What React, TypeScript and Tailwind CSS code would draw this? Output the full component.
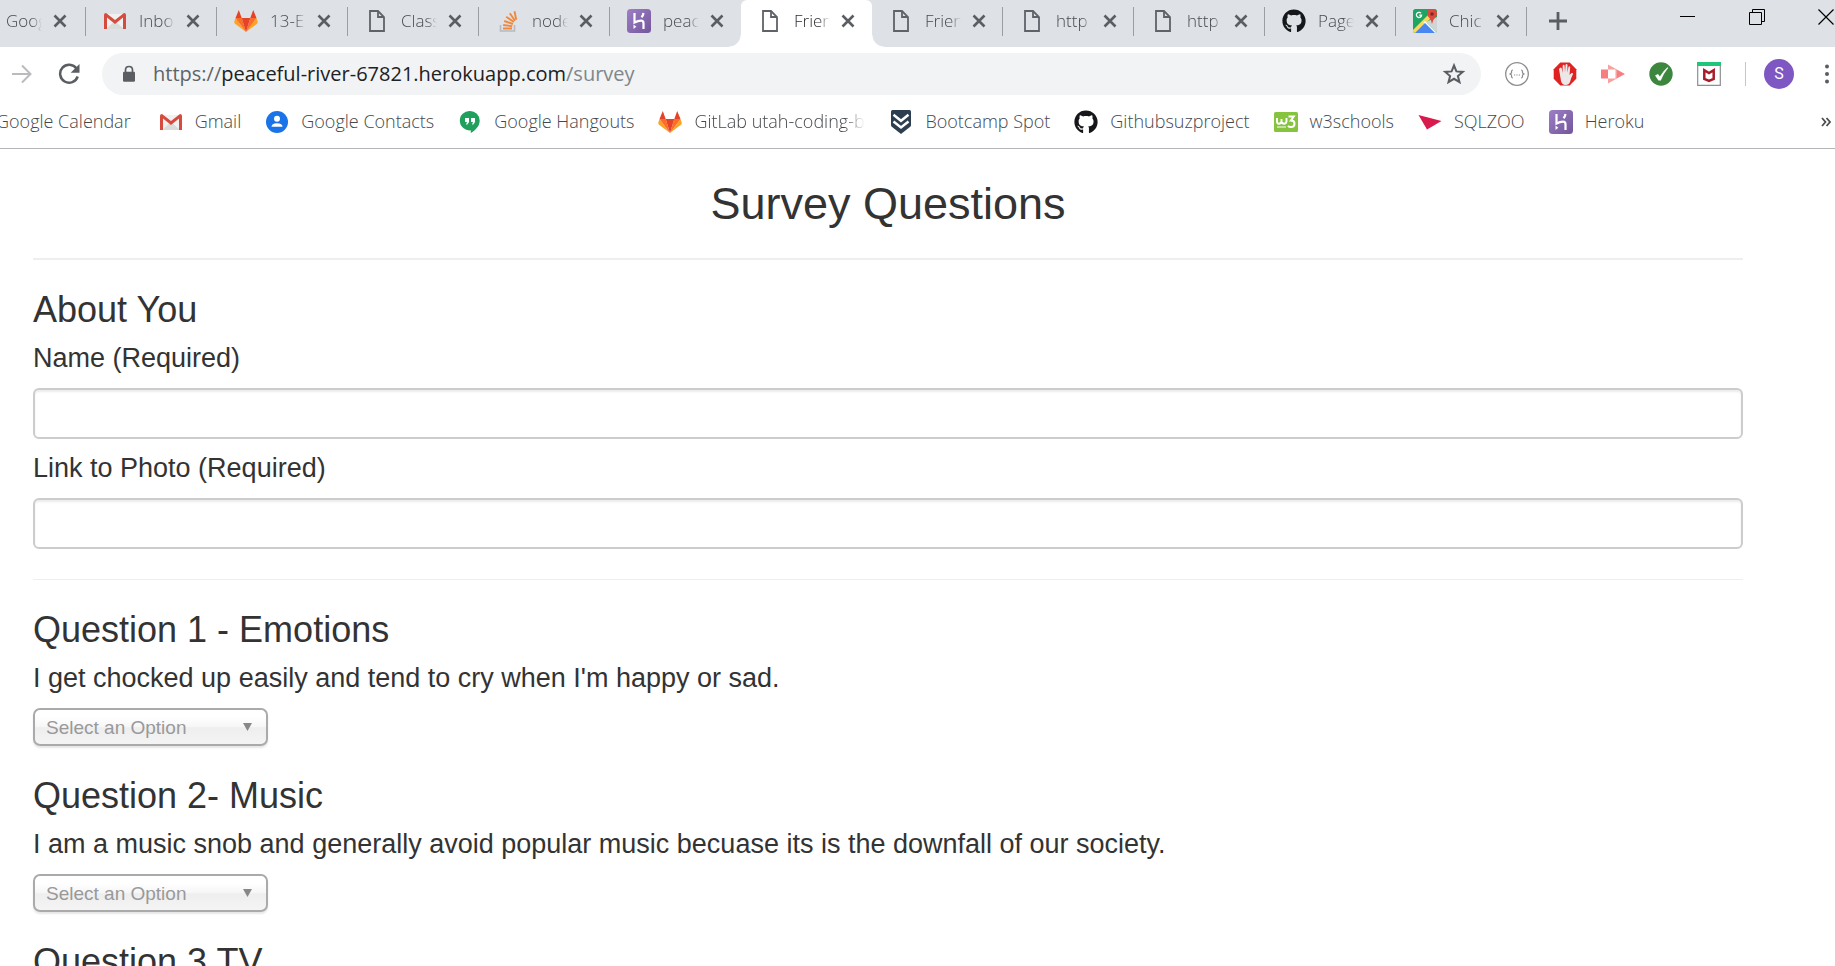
import { useId, useState, type ReactNode } from "react";
import { FaGithub } from "react-icons/fa";

function GmailIcon() {
  return (
    <svg viewBox="0 0 24 24" className="size-6" aria-hidden="true">
      <path d="M3 5h18v15H3z" fill="#f1f1f1" />
      <path d="M3 20 12 12l9 8z" fill="#d9dcd8" />
      <path d="M1 6q0-2 2-2l9 7 9-7q2 0 2 2v14h-3V8.500l-8 6.500-8-6.500V20H1z" fill="#d54b3d" />
    </svg>
  );
}

function GitLabIcon() {
  return (
    <svg viewBox="0 0 24 24" className="size-6" aria-hidden="true">
      <path d="M1.500 9 .200 13l.500 1.500L12 23z M22.500 9l1.300 4-.500 1.500L12 23z" fill="#fca326" />
      <path d="M1.500 9h6.200L12 23z M22.500 9h-6.200L12 23z" fill="#fc6d26" />
      <path d="M7.700 9h8.600L12 23z M4.800 1l2.900 8H1.500z M19.200 1l-2.900 8h6.200z" fill="#e24329" />
    </svg>
  );
}

function PageIcon() {
  return (
    <svg viewBox="0 0 24 24" className="size-6" fill="none" stroke="#5f6368" strokeWidth="1.800" aria-hidden="true">
      <path d="M5 2h8l6 6v14H5z" />
      <path d="M13 2v6h6" />
    </svg>
  );
}

function StackIcon() {
  return (
    <svg viewBox="0 0 24 24" className="size-6" fill="none" aria-hidden="true">
      <path d="M4.500 16v6h14v-6" stroke="#b8babd" strokeWidth="1.600" />
      <g stroke="#f0893f" strokeWidth="1.900">
        <path d="M7 19.500h9M7.200 16l9 1.200M8.200 12l8.700 3M10.200 7.800l7.700 5.200M13.800 4.200l5.200 7.500M18.500 2.200l1.700 8.500" />
      </g>
    </svg>
  );
}

function HerokuIcon() {
  return (
    <svg viewBox="0 0 24 24" className="size-6" aria-hidden="true">
      <defs>
        <linearGradient id="heroku" x1="0" y1="0" x2="1" y2="1">
          <stop offset="0" stopColor="#9d7fc6" />
          <stop offset="1" stopColor="#73559c" />
        </linearGradient>
      </defs>
      <rect width="24" height="24" rx="3.500" fill="url(#heroku)" />
      <g fill="none" stroke="#fff" strokeWidth="2.200">
        <path d="M7.500 4v9.500q3.500-1.800 6.500-1.800 2.500 0 2.500 2.500V20" />
        <path d="M16.500 4q-.300 2.300-2 4.200" />
      </g>
      <path d="m6.500 15.500 2.800 2.300-2.800 2.300z" fill="#fff" />
    </svg>
  );
}

function GithubIcon() {
  return <FaGithub className="size-6 text-[#15171a]" aria-hidden="true" />;
}

function MapsIcon() {
  return (
    <svg viewBox="0 0 24 24" className="size-6" aria-hidden="true">
      <defs>
        <clipPath id="map-tile">
          <rect width="24" height="24" rx="2.500" />
        </clipPath>
      </defs>
      <g clipPath="url(#map-tile)">
        <path d="M0 0h24v24H0z" fill="#1fa463" />
        <path d="M24 8v16l-11-11z" fill="#d2d3d5" />
        <path d="M0 21 18 3l3 3L3 24H0z" fill="#fbd75b" />
        <path d="m12 12 12 12h-3L10.500 13.500z" fill="#fff" />
        <path d="M2 24 12 14l10 10z" fill="#4a86f0" />
      </g>
      <path d="M19 15q-.300-4-3-6.500A5 5 0 1 1 22.600 8Q19.500 11 19 15z" fill="#de4a3c" />
      <circle cx="19" cy="5" r="1.800" fill="#7d2b24" />
      <path d="M8 4.200A2.600 2.600 0 1 0 8.600 6.200H6.200" fill="none" stroke="#fff" strokeWidth="1.300" />
    </svg>
  );
}

function ContactsIcon() {
  return (
    <svg viewBox="0 0 24 24" className="size-6" aria-hidden="true">
      <circle cx="12" cy="12" r="11" fill="#1a73e8" />
      <circle cx="12" cy="8.800" r="3" fill="#fff" />
      <path d="M6.500 16.800q0-3.600 5.500-3.600t5.500 3.600z" fill="#fff" />
    </svg>
  );
}

function HangoutsIcon() {
  return (
    <svg viewBox="0 0 24 24" className="size-6" aria-hidden="true">
      <path d="M12 1a9.700 9.700 0 0 1 9.700 9.700c0 5-4.200 9.800-8.900 12.200v-2.600A9.700 9.700 0 1 1 12 1z" fill="#1fa15d" />
      <path d="M7 8h4v4l-1.600 2.500H8L9 12H7z M13 8h4v4l-1.600 2.500H14L15 12h-2z" fill="#fff" />
    </svg>
  );
}

function BootcampIcon() {
  return (
    <svg viewBox="0 0 24 24" className="size-6" aria-hidden="true">
      <path d="M3.500 0h17q1.500 0 1.500 1.500V15q0 1-.800 1.700L12 24l-9.200-7.300Q2 16 2 15V1.500Q2 0 3.500 0z" fill="#2c3e50" />
      <path d="m4.500 4.800 7.500 6 7.500-6M4.500 11.500l7.500 6 7.500-6" fill="none" stroke="#fff" strokeWidth="2.500" />
    </svg>
  );
}

function W3Icon() {
  return (
    <svg viewBox="0 0 24 24" className="size-6" fill="none" stroke="#fff" aria-hidden="true">
      <rect y="2" width="24" height="20" rx="1.500" fill="#86c440" stroke="none" />
      <path d="M3 8v3.500q0 2.200 2 2.200t2.500-2.200V9v2.500q.500 2.200 2.500 2.200t2.500-2.200V8" strokeWidth="1.900" />
      <path d="M14.500 6.500h5.200l-2.800 4q3.600 0 3.600 3.200T17 17q-2 0-3-1.200" strokeWidth="2" />
      <path d="M3 17h9" strokeWidth="1" />
    </svg>
  );
}

function SqlzooIcon() {
  return (
    <svg viewBox="0 0 24 24" className="size-6" aria-hidden="true">
      <path d="M.500 5 23.500 11 9 19.500z" fill="#d91a4c" />
    </svg>
  );
}

function CloseIcon() {
  return (
    <svg viewBox="0 0 14 14" className="size-3.5" stroke="#5a5d61" strokeWidth="2.600" aria-hidden="true">
      <path d="m1.500 1.500 11 11m0-11-11 11" />
    </svg>
  );
}

type TabInfo = { title: string; icon: ReactNode; active?: boolean; divider?: boolean };

const tabs: TabInfo[] = [
  { title: "Inbo", icon: <GmailIcon />, divider: true },
  { title: "13-E", icon: <GitLabIcon />, divider: true },
  { title: "Class", icon: <PageIcon />, divider: true },
  { title: "node", icon: <StackIcon />, divider: true },
  { title: "peac", icon: <HerokuIcon /> },
  { title: "Frien", icon: <PageIcon />, active: true },
  { title: "Frien", icon: <PageIcon />, divider: true },
  { title: "http", icon: <PageIcon />, divider: true },
  { title: "http", icon: <PageIcon />, divider: true },
  { title: "Page", icon: <GithubIcon />, divider: true },
  { title: "Chic", icon: <MapsIcon />, divider: true },
];

const fade = "[mask-image:linear-gradient(to_right,black_70%,transparent)]";

function Divider() {
  return <span className="absolute top-[7px] right-0 h-[29px] w-px bg-[#9a9da2]" />;
}

function Tab({ title, icon, active, divider }: TabInfo) {
  return (
    <div
      className={
        "relative flex h-full w-[131px] shrink-0 items-center pb-[5px] pl-[17px] " +
        (active
          ? "rounded-t-md bg-white text-[#2c2f33] before:absolute before:bottom-0 before:-left-3 before:size-3 before:bg-[radial-gradient(circle_at_0_0,transparent_11px,white_12px)] after:absolute after:-right-3 after:bottom-0 after:size-3 after:bg-[radial-gradient(circle_at_100%_0,transparent_11px,white_12px)]"
          : "text-[#484c51]")
      }
    >
      {icon}
      <span className={"ml-3 w-9 overflow-hidden whitespace-nowrap " + fade}>{title}</span>
      <button type="button" aria-label={"Close " + title} className="ml-2 flex size-5 items-center justify-center">
        <CloseIcon />
      </button>
      {divider && <Divider />}
    </div>
  );
}

function TabStrip() {
  return (
    <div className="flex h-[47px] items-center bg-[#dee1e6] text-[17px] font-light">
      <div className="relative flex h-full w-[86px] shrink-0 items-center pb-[5px] pl-1.5 text-[#484c51]">
        <span className={"w-9 overflow-hidden whitespace-nowrap " + fade}>Goog</span>
        <button type="button" aria-label="Close Goog" className="ml-2 flex size-5 items-center justify-center">
          <CloseIcon />
        </button>
        <Divider />
      </div>
      {tabs.map((tab, i) => (
        <Tab key={i} {...tab} />
      ))}
      <button type="button" aria-label="New tab" className="ml-[22px] pb-[5px]">
        <svg viewBox="0 0 18 18" className="size-[18px]" stroke="#5a5d61" strokeWidth="2.800" aria-hidden="true">
          <path d="M9 0v18M0 9h18" />
        </svg>
      </button>
      <div className="mr-px ml-auto flex shrink-0 gap-[53px] pb-[13px]">
        <button type="button" aria-label="Minimize">
          <svg viewBox="0 0 16 16" className="size-4" stroke="#000" aria-hidden="true">
            <path d="M0 7.500h15" />
          </svg>
        </button>
        <button type="button" aria-label="Restore">
          <svg viewBox="0 0 16 16" className="size-4" fill="none" stroke="#000" aria-hidden="true">
            <path d="M.500 3.500h12v12H.500zM3.500 3.500v-3h12v12h-3" />
          </svg>
        </button>
        <button type="button" aria-label="Close window">
          <svg viewBox="0 0 16 16" className="size-4" stroke="#000" strokeWidth="1.200" aria-hidden="true">
            <path d="m.500.500 15 15m0-15-15 15" />
          </svg>
        </button>
      </div>
    </div>
  );
}

function AddressText() {
  const [editing, setEditing] = useState(false);
  const [url, setUrl] = useState("https://peaceful-river-67821.herokuapp.com/survey");
  if (editing) {
    return (
      <input
        aria-label="Address"
        autoFocus
        value={url}
        onChange={(e) => setUrl(e.target.value)}
        onBlur={() => setEditing(false)}
        className="flex-1 bg-transparent text-[20px] outline-none"
      />
    );
  }
  const [, scheme, host, path] = url.match(/^(\w+:\/\/)?([^/]*)(.*)$/) ?? ["", "", url, ""];
  return (
    <button
      type="button"
      onClick={() => setEditing(true)}
      className="flex-1 cursor-text text-left text-[20px] whitespace-nowrap text-[#80868b]"
    >
      <span className="text-[#5f6368]">{scheme}</span>
      <span className="text-[#202124]">{host}</span>
      {path}
    </button>
  );
}

function Extensions() {
  return (
    <div className="ml-6 flex shrink-0 items-center gap-6">
      <button type="button" aria-label="JSON viewer">
        <svg viewBox="0 0 24 24" className="size-6" fill="none" stroke="#8b8e91" aria-hidden="true">
          <circle cx="12" cy="12" r="11.300" strokeWidth="1.300" />
          <path d="M8 8q-1.500 0-1.500 1.500v1.500L5 12l1.500 1v1.500Q6.500 16 8 16M16 8q1.500 0 1.500 1.500v1.500l1.500 1-1.500 1v1.500q0 1.500-1.500 1.500" strokeWidth="1.200" />
          <path d="M9 13h1.200M11.400 13h1.200M13.800 13H15" strokeWidth="1.200" />
        </svg>
      </button>
      <button type="button" aria-label="Ad blocker">
        <svg viewBox="0 0 24 24" className="size-6" aria-hidden="true">
          <path d="M7.300.500h9.400l6.600 6.700v9.600l-6.600 6.700H7.300L.700 16.800V7.200z" fill="#df2222" />
          <path
            d="M7 6q1.300-1 1.700.300L9.500 11l.200-7.500q1-1.500 1.900 0L12 10.500l.600-8q1.200-1.300 1.900.200l-.100 8 1.100-6q1.400-1 1.700.500L16.500 13l2-2q1.800-.400 1.500 1-2 4-3 8-1 3-4.500 3Q9 23 8 19L6 7z"
            fill="#ece8e8"
          />
        </svg>
      </button>
      <button type="button" aria-label="Screen recorder">
        <svg viewBox="0 0 24 24" className="size-6" aria-hidden="true">
          <path d="M0 7.500h7v9H0z" fill="#f77d80" />
          <path d="M7 2.500 24 12 7 21.500v-5h7.500v-9H7z" fill="#f9a0a1" />
          <path d="M16 8v8l7.500-4z" fill="#f77d80" />
          <path d="M8.500 8.500H13v7H8.500z" fill="#fff" />
        </svg>
      </button>
      <button type="button" aria-label="Site check">
        <svg viewBox="0 0 24 24" className="size-6" aria-hidden="true">
          <circle cx="12" cy="12" r="11.700" fill="#3c873d" />
          <path d="m6 13.500 3-1.500 1.800 2.500Q14 9 18.500 5.200l.800.500Q14.500 11.500 11.800 18.500H9.500z" fill="#fff" />
        </svg>
      </button>
      <button type="button" aria-label="Web advisor">
        <svg viewBox="0 0 24 24" className="size-6" aria-hidden="true">
          <path d="M.700.700h22.600v22.600H.700z" fill="#fff" stroke="#8c8f93" strokeWidth="1.200" />
          <path d="M0 0h24v4H0z" fill="#1fc67a" />
          <path d="M7.300 8.200v8.600l4.700 2 4.700-2V8.200L12 11z" fill="#fff" stroke="#a81c2a" strokeWidth="2.500" />
        </svg>
      </button>
      <span className="h-6 w-px bg-[#c4c7ca]" />
    </div>
  );
}

function Toolbar() {
  return (
    <div className="flex h-[54px] items-center bg-white pl-3">
      <button type="button" aria-label="Forward" className="shrink-0">
        <svg viewBox="0 0 20 20" className="size-5" fill="none" stroke="#b9bbbe" strokeWidth="2" aria-hidden="true">
          <path d="M0 10h18M10 1.500l8.500 8.500-8.500 8.500" />
        </svg>
      </button>
      <button type="button" aria-label="Reload" className="ml-[26px] shrink-0">
        <svg viewBox="0 0 22 22" className="size-[22px]" aria-hidden="true">
          <path d="M18.500 5.500A9 9 0 1 0 19.700 13.500" fill="none" stroke="#5a5d61" strokeWidth="2.500" />
          <path d="M21.500 1v8.800h-8.800z" fill="#5a5d61" />
        </svg>
      </button>
      <div className="ml-[22px] flex h-[42px] flex-1 items-center rounded-full bg-[#f1f3f4] pr-[15px] pl-5">
        <svg viewBox="0 0 14 18" className="h-[18px] w-3.5 shrink-0" aria-hidden="true">
          <path d="M3.500 8V5q0-3.500 3.500-3.500T10.500 5v3" fill="none" stroke="#5a5d61" strokeWidth="1.700" />
          <rect x="1" y="6.800" width="12" height="10" rx="1.300" fill="#5a5d61" />
        </svg>
        <span className="w-[17px]" />
        <AddressText />
        <button type="button" aria-label="Bookmark this page">
          <svg viewBox="0 0 24 24" className="size-6" fill="none" stroke="#5a5d61" strokeWidth="2" aria-hidden="true">
            <path d="m12 3.500 2.400 5.900 6.400.500-4.900 4.100 1.600 6.200-5.500-3.400-5.500 3.400 1.600-6.200L3.200 9.900l6.400-.500z" />
          </svg>
        </button>
      </div>
      <Extensions />
      <button
        type="button"
        className="ml-[18px] flex size-[30px] shrink-0 items-center justify-center rounded-full bg-[#7e57c2] font-['Roboto',sans-serif] text-[16px] text-white"
      >
        S
      </button>
      <button type="button" aria-label="Menu" className="mr-1.5 ml-[31px] shrink-0">
        <svg viewBox="0 0 4 20" className="h-5 w-1" fill="#5a5d61" aria-hidden="true">
          <circle cx="2" cy="2.500" r="2" />
          <circle cx="2" cy="10" r="2" />
          <circle cx="2" cy="17.500" r="2" />
        </svg>
      </button>
    </div>
  );
}

const bookmarks: { title: string; icon: ReactNode; long?: boolean }[] = [
  { title: "Gmail", icon: <GmailIcon /> },
  { title: "Google Contacts", icon: <ContactsIcon /> },
  { title: "Google Hangouts", icon: <HangoutsIcon /> },
  { title: "GitLab utah-coding-b", icon: <GitLabIcon />, long: true },
  { title: "Bootcamp Spot", icon: <BootcampIcon /> },
  { title: "Githubsuzproject", icon: <GithubIcon /> },
  { title: "w3schools", icon: <W3Icon /> },
  { title: "SQLZOO", icon: <SqlzooIcon /> },
  { title: "Heroku", icon: <HerokuIcon /> },
];

function BookmarksBar() {
  return (
    <nav className="flex h-12 items-center gap-6 overflow-hidden border-b border-[#b3b5b8] bg-white pb-1.5 text-[18px] font-light whitespace-nowrap text-[#44484c]">
      <a href="#calendar" className="-ml-1 pr-1">
        Google Calendar
      </a>
      {bookmarks.map((b) => (
        <a key={b.title} href={"#" + b.title} className="flex items-center gap-3">
          {b.icon}
          <span
            className={
              b.long
                ? "w-[171px] overflow-hidden [mask-image:linear-gradient(to_right,black_88%,transparent)]"
                : ""
            }
          >
            {b.title}
          </span>
        </a>
      ))}
      <button type="button" aria-label="More bookmarks" className="mr-1 ml-auto">
        <svg viewBox="0 0 10 10" className="size-2.5" fill="none" stroke="#4a4d50" strokeWidth="1.800" aria-hidden="true">
          <path d="m1 1 3.500 4L1 9M5.500 1 9 5 5.500 9" />
        </svg>
      </button>
    </nav>
  );
}

const labelStyle = "mt-3.5 mb-[15px] block text-[27px] leading-[30px]";

function TextField({ label }: { label: string }) {
  const id = useId();
  return (
    <>
      <label htmlFor={id} className={labelStyle}>
        {label}
      </label>
      <input
        id={id}
        type="text"
        className="block h-[51px] w-full rounded-md border-2 border-[#ccc] bg-white px-4 text-[21px] shadow-[inset_0_2px_2px_rgba(0,0,0,0.075)]"
      />
    </>
  );
}

function Question({ title, text }: { title: string; text?: string }) {
  const id = useId();
  return (
    <section className="mb-[30px]">
      <h3 className="text-[36px] leading-[39px]">{title}</h3>
      {text && (
        <>
          <label htmlFor={id} className={labelStyle}>
            {text}
          </label>
          <div className="relative w-[235px]">
            <select
              id={id}
              className="block h-[38px] w-full appearance-none rounded-[7px] border-2 border-[#aaa] bg-[linear-gradient(#fff_20%,#f6f6f6_50%,#eee_52%,#f4f4f4)] pt-0.5 pl-[11px] text-[19px] text-[#999] shadow-[0_2px_2px_rgba(0,0,0,0.1)]"
            >
              <option>Select an Option</option>
            </select>
            <svg
              viewBox="0 0 9 8"
              className="pointer-events-none absolute top-[15px] right-4 h-2 w-[9px]"
              fill="#888"
              aria-hidden="true"
            >
              <path d="M0 0h9L4.500 8z" />
            </svg>
          </div>
        </>
      )}
    </section>
  );
}

export default function App() {
  return (
    <div className="flex h-screen flex-col overflow-hidden bg-white">
      <header className="shrink-0 font-['Open_Sans','Noto_Sans',sans-serif]">
        <TabStrip />
        <Toolbar />
        <BookmarksBar />
      </header>
      <main className="min-h-0 flex-1 overflow-y-auto pt-[30px] pr-[92px] pl-[33px] font-['Liberation_Sans',Arial,sans-serif] text-[#333] [scrollbar-width:none]">
        <h2 className="text-center text-[45px] leading-[50px]">Survey Questions</h2>
        <hr className="mt-[29px] mb-[30px] border-t-2 border-[#eee]" />
        <h3 className="text-[36px] leading-[39px]">About You</h3>
        <TextField label="Name (Required)" />
        <TextField label="Link to Photo (Required)" />
        <hr className="mt-[30px] mb-[30px] border-t border-[#eee]" />
        <Question title="Question 1 - Emotions" text="I get chocked up easily and tend to cry when I'm happy or sad." />
        <Question
          title="Question 2- Music"
          text="I am a music snob and generally avoid popular music becuase its is the downfall of our society."
        />
        <Question title="Question 3 TV" />
      </main>
    </div>
  );
}
